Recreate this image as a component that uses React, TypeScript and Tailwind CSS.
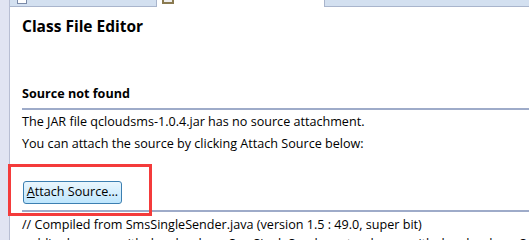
import React from "react";

export default function App() {
  const body = { fontFamily: '"Open Sans", "Noto Sans", sans-serif' };
  return (
    <div className="w-[529px] h-[240px] overflow-hidden bg-white flex" style={body}>
      <div className="w-[10px] shrink-0 bg-[#e1e4f2] border-r border-[#b8bed3]" />
      <div className="flex-1 flex flex-col min-w-0">
        <div className="h-[7px] flex shrink-0 overflow-hidden">
          <div className="w-[147px] bg-[#d3e0f0] border-b border-r border-[#a9b5cc] relative overflow-hidden">
            <div className="absolute left-[7px] top-[-6px] w-[10px] h-[10px] border border-[#7a8aa8] bg-white" />
            <div className="absolute left-[24px] top-[-14px] text-[12.6px] leading-[14px] text-black whitespace-nowrap">SmsSingleSender.java</div>
          </div>
          <div className="w-[167px] bg-white relative overflow-hidden">
            <div className="absolute left-[5px] top-[-6px] w-[12px] h-[10px] border-2 border-[#8a7a50] bg-[#eee]" />
            <div className="absolute left-[22px] top-[-14px] text-[12.6px] leading-[14px] text-black whitespace-nowrap">SmsSingleSender.class</div>
          </div>
          <div className="flex-1 bg-[#d3e0f0] border-b border-l border-[#a9b5cc]" />
        </div>
        <div className="pl-[12px] text-[12.6px] text-black">
          <div className="mt-[9px] text-[15.5px] font-bold leading-[20px]">Class File Editor</div>
          <div className="mt-[49px] text-[12.6px] font-bold leading-[17px]">Source not found</div>
          <div className="mt-[6px] h-[2px] bg-[#9eabc9]" />
          <div className="leading-[23px] whitespace-nowrap">The JAR file qcloudsms-1.0.4.jar has no source attachment.</div>
          <div className="leading-[22px] whitespace-nowrap">You can attach the source by clicking Attach Source below:</div>
          <div className="relative mt-[26px] h-[23px] ml-[1px]">
            <div className="absolute left-[-15px] top-[-17px] w-[144px] h-[52px] border-[3px] border-[#f43b3b]" />
            <button className="relative w-[99px] h-[23px] rounded-[3px] border border-[#3c7fb1] bg-gradient-to-b from-[#eaf6fd] to-[#bee6fd] text-[12.6px] text-black leading-none">
              <span className="underline">A</span>ttach Source...
            </button>
          </div>
          <div className="mt-[6px] h-[2px] bg-[#9eabc9]" />
          <div className="mt-[5px] leading-[16px] whitespace-nowrap">// Compiled from SmsSingleSender.java (version 1.5 : 49.0, super bit)</div>
          <div className="mt-[3px] leading-[16px] whitespace-nowrap">public class com.github.qcloudsms.SmsSingleSender extends com.github.qcloudsms.SmsBase {"{"}</div>
        </div>
      </div>
    </div>
  );
}
